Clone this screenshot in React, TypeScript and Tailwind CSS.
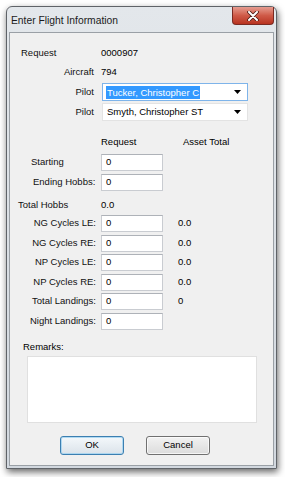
import { useState } from 'react';

const labelCls = 'w-[87px] shrink-0 text-[#111]';

function Field({ label, align = 'right', pad = 0, value, asset }: { label: string; align?: 'left' | 'right'; pad?: number; value: string; asset?: string }) {
  return (
    <div className="flex items-center h-[17px]">
      <div className={`${labelCls} ${align === 'right' ? 'text-right pr-[1px]' : 'text-left'}`} style={{ paddingLeft: pad }}>
        {label}
      </div>
      <div className="ml-[4px] w-[62px] h-[17px] bg-white border border-[#c9ccd1] border-t-[#aeb2b8] flex items-center pl-[4px]">
        {value}
      </div>
      {asset && <div className="ml-[15px]">{asset}</div>}
    </div>
  );
}

function Arrow() {
  return (
    <svg width="7" height="4" viewBox="0 0 7 4" className="mr-[6px]">
      <path d="M0 0 H7 L3.5 4 Z" fill="#000" />
    </svg>
  );
}

export default function App() {
  const [remarks, setRemarks] = useState('');
  const cycles = [
    { label: 'NG Cycles LE:', asset: '0.0' },
    { label: 'NG Cycles RE:', asset: '0.0' },
    { label: 'NP Cycles LE:', asset: '0.0' },
    { label: 'NP Cycles RE:', asset: '0.0' },
    { label: 'Total Landings:', asset: '0' },
    { label: 'Night Landings:' },
  ];

  return (
    <div className="w-[285px] h-[477px] bg-white pt-[6px] pl-[6px] font-['Liberation_Sans',Arial,sans-serif] text-[9.5px] text-black">
      {/* Window frame */}
      <div className="w-[271px] h-[463px] rounded-t-[6px] border border-[#5f6368] bg-gradient-to-b from-[#e3e7eb] to-[#d2d8df] shadow-[1px_3px_7px_rgba(0,0,0,0.6)] flex flex-col px-[2px] pb-[2px]">
        {/* Title bar */}
        <div className="h-[25px] flex items-start justify-between shrink-0">
          <div className="pl-[2px] pt-[6px] text-[10.3px] text-[#1b1b1b]">Enter Flight Information</div>
          <button className="w-[42px] h-[18px] rounded-b-[4px] border border-t-0 border-[#7a2a22] bg-gradient-to-b from-[#e59c90] via-[#cf5a48] to-[#b8321f] flex items-center justify-center">
            <svg width="12" height="10" viewBox="0 0 12 10">
              <path d="M2 1 L10 9 M10 1 L2 9" stroke="#4a1a14" strokeWidth="3.6" strokeLinecap="round" />
              <path d="M2 1 L10 9 M10 1 L2 9" stroke="#fff" strokeWidth="2" strokeLinecap="round" />
            </svg>
          </button>
        </div>

        {/* Client area */}
        <div className="flex-1 bg-[#f0f0f0] border border-[#9aa0a6] flex flex-col">
          <div className="mt-[11px] flex items-center h-[18px]">
            <div className={`${labelCls} pl-[11px]`}>Request</div>
            <div className="ml-[4px]">0000907</div>
          </div>
          <div className="mt-[1px] flex items-center h-[18px]">
            <div className={`${labelCls} text-right pr-[3px]`}>Aircraft</div>
            <div className="ml-[4px]">794</div>
          </div>
          <div className="mt-[2px] flex items-center h-[18px]">
            <div className={`${labelCls} text-right pr-[3px]`}>Pilot</div>
            <div className="ml-[5px] w-[146px] h-[18px] bg-white border border-[#7eb4ea] flex items-center justify-between pl-[3px]">
              <span className="bg-[#3399ff] text-white px-[1px] leading-[13px]">Tucker, Christopher C</span>
              <Arrow />
            </div>
          </div>
          <div className="mt-[2px] flex items-center h-[18px]">
            <div className={`${labelCls} text-right pr-[3px]`}>Pilot</div>
            <div className="ml-[5px] w-[146px] h-[18px] bg-white border border-[#e3e3e3] flex items-center justify-between pl-[4px]">
              <span>Smyth, Christopher ST</span>
              <Arrow />
            </div>
          </div>

          <div className="mt-[12px] flex items-center h-[18px]">
            <div className="w-[91px] shrink-0" />
            <div className="w-[82px]">Request</div>
            <div>Asset Total</div>
          </div>
          <div className="mt-[3px]">
            <Field label="Starting" align="left" pad={21} value="0" />
          </div>
          <div className="mt-[3px]">
            <Field label="Ending Hobbs:" align="left" pad={23} value="0" />
          </div>
          <div className="mt-[5px] flex items-center h-[18px]">
            <div className={`${labelCls} pl-[8px]`}>Total Hobbs</div>
            <div className="ml-[4px]">0.0</div>
          </div>

          <div className="mt-[1px] flex flex-col gap-[2.5px]">
            {cycles.map((c) => (
              <Field key={c.label} label={c.label} value="0" asset={c.asset} />
            ))}
          </div>

          <div className="mt-[10px] h-[15px] pl-[13px] flex items-center">Remarks:</div>
          <textarea
            value={remarks}
            onChange={(e) => setRemarks(e.target.value)}
            className="mt-[1px] ml-[17px] w-[230px] h-[67px] bg-white border border-[#e0e0e0] resize-none outline-none"
          />

          <div className="mt-[13px] flex pl-[50px] gap-[22px]">
            <button className="w-[64px] h-[19px] rounded-[3px] border border-[#3c7fb1] bg-gradient-to-b from-[#f4f8fb] to-[#dbe3ea] shadow-[inset_0_0_0_1px_rgba(160,210,240,0.8)] text-[9.5px]">
              OK
            </button>
            <button className="w-[64px] h-[19px] rounded-[3px] border border-[#707070] bg-gradient-to-b from-[#f2f2f2] to-[#dcdcdc] shadow-[inset_0_0_0_1px_rgba(255,255,255,0.7)] text-[9.5px]">
              Cancel
            </button>
          </div>
        </div>
      </div>
    </div>
  );
}
